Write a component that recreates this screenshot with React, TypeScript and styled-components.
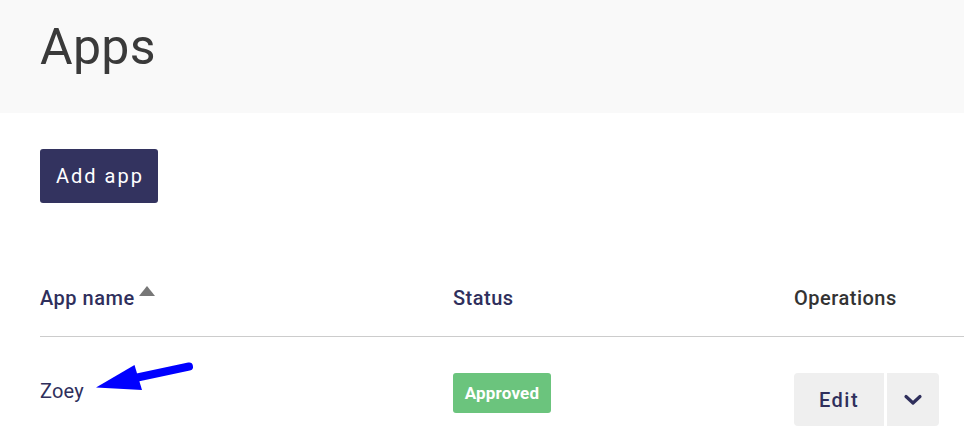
import React from "react";
import styled, { createGlobalStyle } from "styled-components";

const Global = createGlobalStyle`
  html, body { margin: 0; padding: 0; background: #fff; }
  body { font-family: Roboto, "Liberation Sans", sans-serif; }
  * { box-sizing: border-box; }
`;

const Page = styled.div`
  position: relative;
  width: 964px;
  min-height: 447px;
  overflow: hidden;
`;

const Header = styled.header`
  height: 113px;
  background: #f9f9f9;
  padding: 0 40px;
  display: flex;
  align-items: flex-start;
`;

const Title = styled.h1`
  margin: 17px 0 0;
  font-size: 50px;
  font-weight: 400;
  line-height: 60px;
  color: #3a3a3a;
  letter-spacing: 0.3px;
`;

const Content = styled.main`
  padding: 36px 0 0 40px;
`;

const PrimaryButton = styled.button`
  width: 118px;
  height: 54px;
  border: none;
  border-radius: 3px;
  background: #33335f;
  color: #fff;
  font-family: Roboto, "Liberation Sans", sans-serif;
  font-size: 20px;
  font-weight: 400;
  letter-spacing: 2px;
  padding: 0 0 0 2px;
  cursor: pointer;
`;

const Table = styled.div`
  margin-top: 83px;
  display: grid;
  grid-template-columns: 413px 341px 1fr;
`;

const HeadCell = styled.div<{ $dark?: boolean }>`
  display: flex;
  align-items: center;
  height: 51px;
  padding-bottom: 27px;
  border-bottom: 1px solid #cccccc;
  font-size: 20px;
  font-weight: 500;
  line-height: 24px;
  letter-spacing: 0.5px;
  color: ${(p) => (p.$dark ? "#333333" : "#2f2f5c")};
`;

const SortIcon = styled.span`
  display: inline-block;
  width: 0;
  height: 0;
  margin-left: 4px;
  margin-top: -14px;
  border-left: 8px solid transparent;
  border-right: 8px solid transparent;
  border-bottom: 10px solid #777777;
`;

const Cell = styled.div`
  padding-top: 36px;
  display: flex;
  align-items: flex-start;
`;

const NameText = styled.span`
  font-size: 20px;
  line-height: 36px;
  letter-spacing: 0.2px;
  color: #2f2f5c;
`;

const Badge = styled.span`
  display: inline-flex;
  align-items: center;
  justify-content: center;
  width: 98px;
  height: 40px;
  border-radius: 3px;
  background: #6bc47d;
  color: #fff;
  font-size: 17px;
  font-weight: 700;
  letter-spacing: 0.2px;
`;

const SplitButton = styled.div`
  display: flex;
  gap: 3px;
`;

const EditButton = styled.button`
  width: 90px;
  height: 53px;
  border: none;
  border-radius: 4px 0 0 4px;
  background: #efefef;
  color: #2f2f5c;
  font-family: Roboto, "Liberation Sans", sans-serif;
  font-size: 20px;
  font-weight: 500;
  letter-spacing: 1.5px;
  padding: 0;
  cursor: pointer;
`;

const ToggleButton = styled.button`
  width: 52px;
  height: 53px;
  border: none;
  border-radius: 0 4px 4px 0;
  background: #efefef;
  display: flex;
  align-items: center;
  justify-content: center;
  padding: 0;
  cursor: pointer;
`;

const Annotation = styled.svg`
  position: absolute;
  left: 0;
  top: 0;
  pointer-events: none;
`;

export default function App() {
  return (
    <Page>
      <Global />
      <Header>
        <Title>Apps</Title>
      </Header>
      <Content>
        <PrimaryButton>Add app</PrimaryButton>
        <Table>
          <HeadCell>
            App name
            <SortIcon />
          </HeadCell>
          <HeadCell>Status</HeadCell>
          <HeadCell $dark>Operations</HeadCell>
          <Cell>
            <NameText>Zoey</NameText>
          </Cell>
          <Cell>
            <Badge>Approved</Badge>
          </Cell>
          <Cell>
            <SplitButton>
              <EditButton>Edit</EditButton>
              <ToggleButton aria-label="More">
                <svg width="20" height="12" viewBox="0 0 20 12">
                  <path
                    d="M3 2.5 L10 9 L17 2.5"
                    fill="none"
                    stroke="#2f2f5c"
                    strokeWidth="3.2"
                    strokeLinecap="round"
                    strokeLinejoin="round"
                  />
                </svg>
              </ToggleButton>
            </SplitButton>
          </Cell>
        </Table>
      </Content>
      <Annotation width="964" height="447" viewBox="0 0 964 447">
        <path
          d="M189 366.5 L135 378"
          stroke="#0000ff"
          strokeWidth="8"
          strokeLinecap="round"
          fill="none"
        />
        <path d="M96 387.5 L134.5 365 L142 390 Z" fill="#0000ff" />
      </Annotation>
    </Page>
  );
}
